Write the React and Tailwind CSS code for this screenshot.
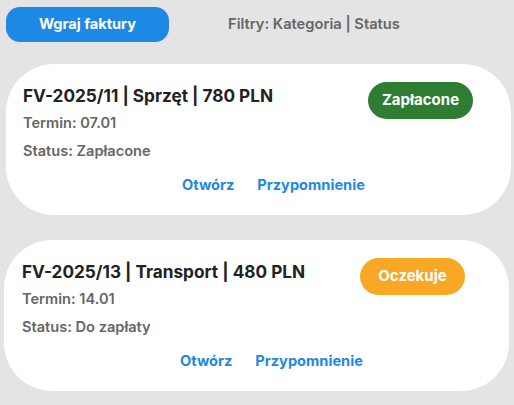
import React from "react";

const invoices = [
  {
    id: "FV-2025/11",
    category: "Sprzęt",
    amount: "780 PLN",
    due: "07.01",
    status: "Zapłacone",
    badge: "Zapłacone",
    badgeClass: "bg-[#2e7d32]",
    cardClass: "ml-[6px] mr-[3px] mt-[22px] pl-[17px] pr-[38px]",
    linksClass: "pl-[159px]",
  },
  {
    id: "FV-2025/13",
    category: "Transport",
    amount: "480 PLN",
    due: "14.01",
    status: "Do zapłaty",
    badge: "Oczekuje",
    badgeClass: "bg-[#f9a825]",
    cardClass: "ml-[4px] mr-[5px] mt-[25px] pl-[18px] pr-[44px]",
    linksClass: "pl-[158px]",
  },
];

const App = () => {
  return (
    <div className="min-h-[405px] bg-[#e4e4e4] font-['Inter',sans-serif] pt-[7px]">
      {/* Toolbar */}
      <div className="flex items-center">
        <button className="ml-[6px] w-[163px] h-[35px] rounded-[14px] bg-[#1e88e5] text-white text-[14.6px] font-bold">
          Wgraj faktury
        </button>
        <span className="ml-[59px] text-[14.7px] font-semibold text-[#666]">
          Filtry: Kategoria | Status
        </span>
      </div>

      {/* Invoice cards */}
      {invoices.map((inv) => (
        <div
          key={inv.id}
          className={`bg-white rounded-[48px] h-[151px] pt-[18px] ${inv.cardClass}`}
        >
          <div className="flex items-start justify-between">
            <div className="pt-[3px]">
              <h2 className="text-[17.2px] font-bold text-[#222] leading-[22px]">
                {inv.id} | {inv.category} | {inv.amount}
              </h2>
              <p className="mt-[7px] text-[14.6px] font-semibold text-[#666] leading-[18px]">
                Termin: {inv.due}
              </p>
              <p className="mt-[10px] text-[14.6px] font-semibold text-[#666] leading-[18px]">
                Status: {inv.status}
              </p>
            </div>
            <span
              className={`w-[105px] h-[37px] rounded-full flex items-center justify-center text-white text-[15px] font-bold ${inv.badgeClass}`}
            >
              {inv.badge}
            </span>
          </div>
          <div className={`flex gap-[23px] mt-[16px] ${inv.linksClass}`}>
            <a className="text-[14.6px] font-bold text-[#1e88e5] leading-[18px]">Otwórz</a>
            <a className="text-[14.6px] font-bold text-[#1e88e5] leading-[18px]">Przypomnienie</a>
          </div>
        </div>
      ))}
    </div>
  );
};

export default App;
